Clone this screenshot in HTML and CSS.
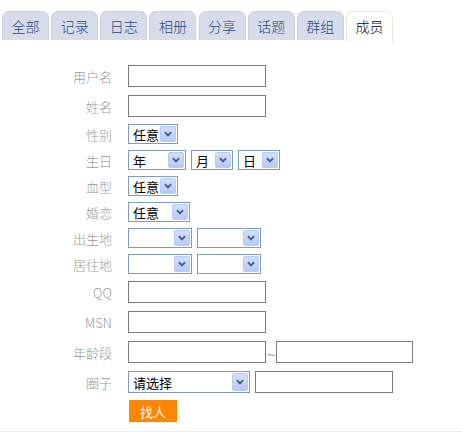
FILE: index.html
```html
<!DOCTYPE html>
<html lang="zh-CN">
<head>
<meta charset="utf-8">
<title>成员</title>
<link rel="stylesheet" href="styles.css">
</head>
<body>
<div class="page">
  <nav class="tabs">
    <a class="tab">全部</a>
    <a class="tab">记录</a>
    <a class="tab">日志</a>
    <a class="tab">相册</a>
    <a class="tab">分享</a>
    <a class="tab">话题</a>
    <a class="tab">群组</a>
    <a class="tab active">成员</a>
  </nav>
  <form class="search">
    <div class="row tall"><label class="lbl">用户名</label><input class="txt" type="text"></div>
    <div class="row tall"><label class="lbl">姓名</label><input class="txt" type="text"></div>
    <div class="row"><label class="lbl">性别</label>
      <span class="sel w50"><span class="sel-val">任意</span><span class="sel-btn"><svg viewBox="0 0 16 16" width="14" height="14"><path d="M4.5 6 L8 9.5 L11.5 6" fill="none" stroke="#4b5f87" stroke-width="2.2"/></svg></span></span>
    </div>
    <div class="row"><label class="lbl">生日</label>
      <span class="sel w58"><span class="sel-val">年</span><span class="sel-btn"><svg viewBox="0 0 16 16" width="14" height="14"><path d="M4.5 6 L8 9.5 L11.5 6" fill="none" stroke="#4b5f87" stroke-width="2.2"/></svg></span></span>
      <span class="sel w42"><span class="sel-val">月</span><span class="sel-btn"><svg viewBox="0 0 16 16" width="14" height="14"><path d="M4.5 6 L8 9.5 L11.5 6" fill="none" stroke="#4b5f87" stroke-width="2.2"/></svg></span></span>
      <span class="sel w42"><span class="sel-val">日</span><span class="sel-btn"><svg viewBox="0 0 16 16" width="14" height="14"><path d="M4.5 6 L8 9.5 L11.5 6" fill="none" stroke="#4b5f87" stroke-width="2.2"/></svg></span></span>
    </div>
    <div class="row"><label class="lbl">血型</label>
      <span class="sel w50"><span class="sel-val">任意</span><span class="sel-btn"><svg viewBox="0 0 16 16" width="14" height="14"><path d="M4.5 6 L8 9.5 L11.5 6" fill="none" stroke="#4b5f87" stroke-width="2.2"/></svg></span></span>
    </div>
    <div class="row"><label class="lbl">婚恋</label>
      <span class="sel w62"><span class="sel-val">任意</span><span class="sel-btn"><svg viewBox="0 0 16 16" width="14" height="14"><path d="M4.5 6 L8 9.5 L11.5 6" fill="none" stroke="#4b5f87" stroke-width="2.2"/></svg></span></span>
    </div>
    <div class="row"><label class="lbl">出生地</label>
      <span class="sel w64"><span class="sel-val"></span><span class="sel-btn"><svg viewBox="0 0 16 16" width="14" height="14"><path d="M4.5 6 L8 9.5 L11.5 6" fill="none" stroke="#4b5f87" stroke-width="2.2"/></svg></span></span>
      <span class="sel w64"><span class="sel-val"></span><span class="sel-btn"><svg viewBox="0 0 16 16" width="14" height="14"><path d="M4.5 6 L8 9.5 L11.5 6" fill="none" stroke="#4b5f87" stroke-width="2.2"/></svg></span></span>
    </div>
    <div class="row"><label class="lbl">居住地</label>
      <span class="sel w64"><span class="sel-val"></span><span class="sel-btn"><svg viewBox="0 0 16 16" width="14" height="14"><path d="M4.5 6 L8 9.5 L11.5 6" fill="none" stroke="#4b5f87" stroke-width="2.2"/></svg></span></span>
      <span class="sel w64"><span class="sel-val"></span><span class="sel-btn"><svg viewBox="0 0 16 16" width="14" height="14"><path d="M4.5 6 L8 9.5 L11.5 6" fill="none" stroke="#4b5f87" stroke-width="2.2"/></svg></span></span>
    </div>
    <div class="row tall"><label class="lbl">QQ</label><input class="txt" type="text"></div>
    <div class="row tall"><label class="lbl">MSN</label><input class="txt" type="text"></div>
    <div class="row tall"><label class="lbl">年龄段</label><input class="txt" type="text"><span class="tilde">~</span><input class="txt w137" type="text"></div>
    <div class="row tall"><label class="lbl">圈子</label>
      <span class="sel w122 h22"><span class="sel-val">请选择</span><span class="sel-btn"><svg viewBox="0 0 16 16" width="14" height="14"><path d="M4.5 6 L8 9.5 L11.5 6" fill="none" stroke="#4b5f87" stroke-width="2.2"/></svg></span></span>
      <input class="txt gap5" type="text">
    </div>
    <div class="row btnrow"><span class="lbl"></span><button class="go" type="button">找人</button></div>
  </form>
</div>
</body>
</html>
```

FILE: styles.css
```css
* { box-sizing: border-box; }
html, body { margin: 0; padding: 0; background: #fff; }
body {
  font-family: "Noto Sans CJK SC", "Liberation Sans", sans-serif;
  font-size: 13px;
  width: 462px;
  height: 433px;
  overflow: hidden;
}
.page {
  height: 432px;
  border-bottom: 1px solid #e4eff2;
}
.tabs {
  display: flex;
  gap: 2.15px;
  padding: 11px 0 0 2px;
  height: 42px;
  align-items: flex-start;
}
.tab {
  width: 47px;
  height: 29px;
  display: flex;
  align-items: center;
  justify-content: center;
  background: #d6dce9;
  border: 1px solid #cad2e1;
  border-bottom: none;
  border-radius: 7px 7px 0 0;
  color: #2b4a7c;
  font-size: 14px;
  font-weight: 300;
  line-height: 1;
}
.tab.active {
  background: #fff;
  border-color: #ebe7d6;
  color: #000;
  height: 31px;
  padding-bottom: 2px;
}
.search {
  padding-top: 19px;
}
.row {
  display: flex;
  align-items: center;
  height: 26px;
}
.row.tall { height: 30px; }
.row.btnrow { height: 28px; }
.lbl {
  width: 112px;
  margin-right: 16px;
  text-align: right;
  color: #9a9a9a;
  font-size: 13px;
  font-weight: 300;
  line-height: 1;
  flex: none;
}
.txt {
  width: 138px;
  height: 22px;
  border: 1px solid #7c7c7c;
  background: #fff;
  margin: 0;
  padding: 0 3px;
  font: inherit;
  outline: none;
}
.txt.w137 { width: 137px; }
.txt.gap5 { margin-left: 5px; }
.tilde {
  width: 10px;
  text-align: center;
  color: #999;
  font-family: "Liberation Sans", sans-serif;
  font-size: 14px;
  line-height: 1;
  padding-top: 6px;
}
.sel {
  display: inline-flex;
  align-items: center;
  justify-content: space-between;
  height: 20px;
  border: 1px solid #7f9db9;
  background: #fff;
  padding: 1px 1px 1px 4px;
  margin-right: 5px;
  flex: none;
}
.sel.h22 { height: 22px; margin-right: 0; }
.sel.w50 { width: 50px; }
.sel.w58 { width: 58px; }
.sel.w42 { width: 42px; }
.sel.w62 { width: 62px; }
.sel.w64 { width: 64px; }
.sel.w122 { width: 122px; }
.sel-val {
  color: #000;
  font-size: 13px;
  line-height: 1;
  white-space: nowrap;
}
.sel-btn {
  width: 16px;
  height: 16px;
  display: flex;
  align-items: center;
  justify-content: center;
  background: linear-gradient(#d3e0fc, #b6caf7);
  border: 1px solid #b8cbf4;
  border-radius: 2px;
  flex: none;
}
.sel.h22 .sel-btn { height: 18px; }
.go {
  width: 48px;
  height: 22px;
  margin-left: 1px;
  border: none;
  background: #ff8503;
  color: #fff;
  font: inherit;
  font-size: 13px;
  padding: 0;
  line-height: 1;
}
```
